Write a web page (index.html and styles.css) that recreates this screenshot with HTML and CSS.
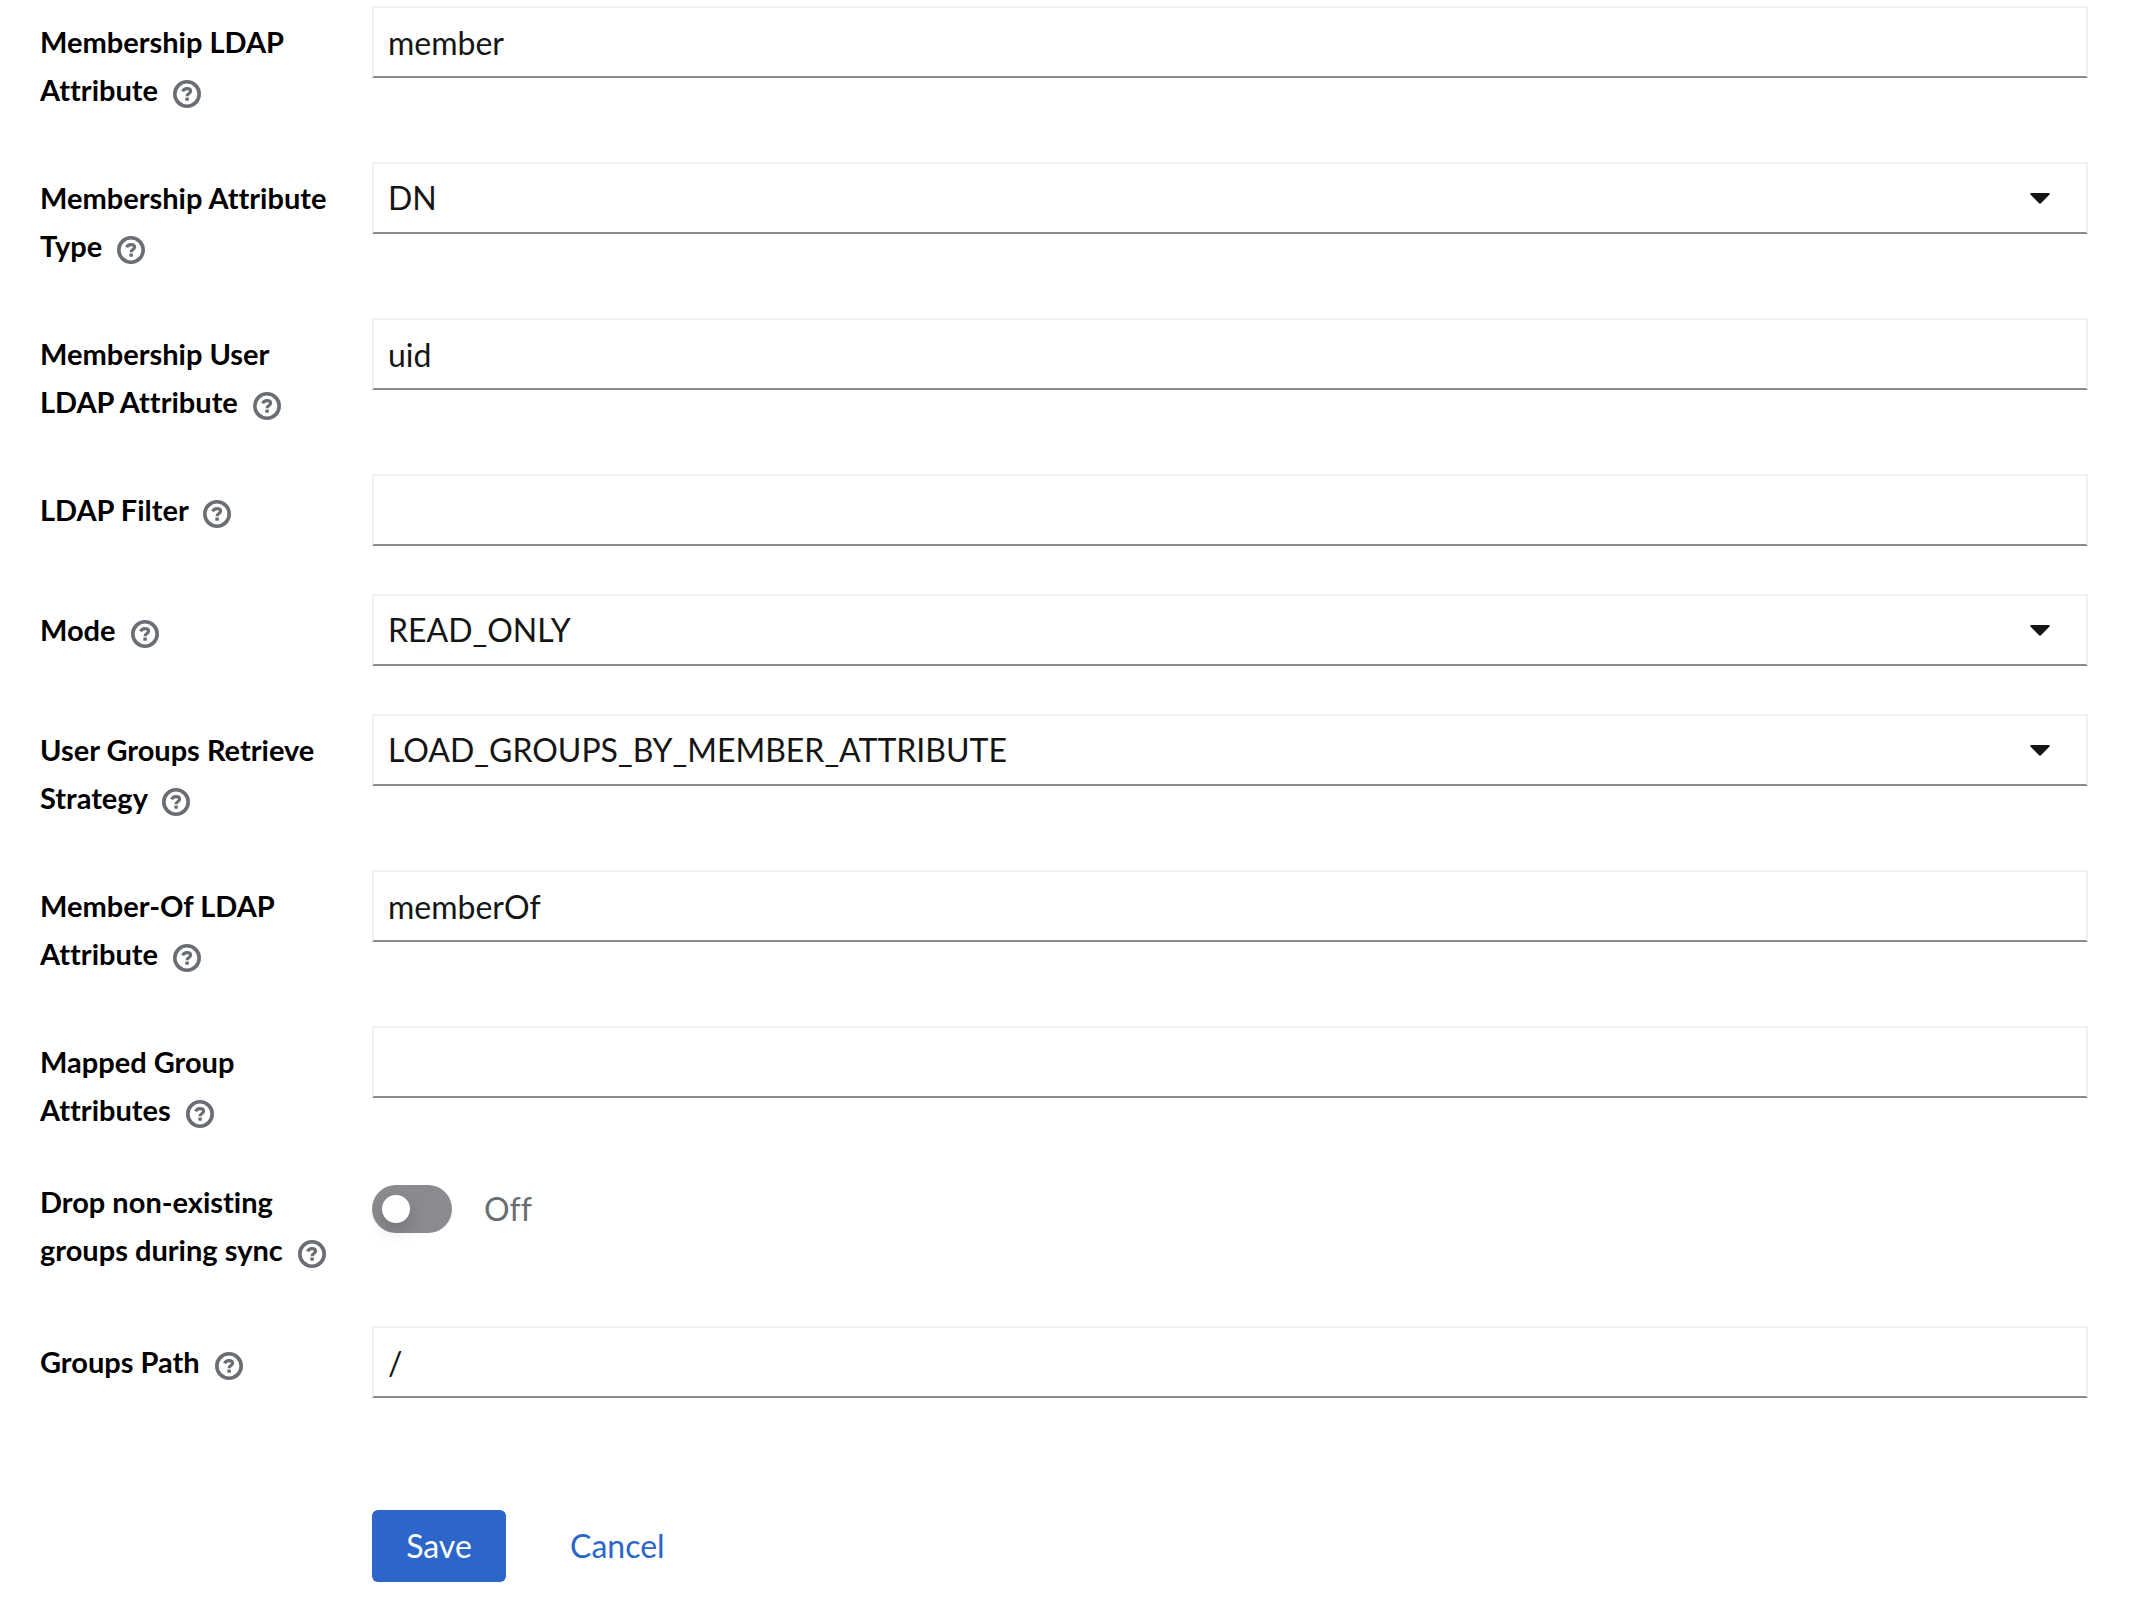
FILE: index.html
```html
<!DOCTYPE html>
<html lang="en">
<head>
    <meta charset="UTF-8">
    <title>Group LDAP Mapper</title>
    <link rel="stylesheet" href="styles.css">
</head>
<body>
    <svg class="sprite" aria-hidden="true">
        <symbol id="help" viewBox="0 0 28 28">
            <circle cx="14" cy="14" r="12.2" fill="none" stroke="currentColor" stroke-width="3.6"/>
            <path d="M9.6 11.4C10.4 9.4 12 8.6 14 8.6c2.2 0 3.6 1 3.6 2.7 0 2.3-3.5 2.2-3.5 4.900" fill="none" stroke="currentColor" stroke-width="3.2"/>
            <rect x="12.3" y="17.5" width="3.6" height="3.2" rx="0.6" fill="currentColor"/>
        </symbol>
        <symbol id="caret" viewBox="0 0 20 11">
            <path d="M1.2 0h17.6c.9 0 1.3 1 .7 1.6L11 10.2c-.6.6-1.4.6-2 0L.5 1.6C-.1 1 .3 0 1.2 0z" fill="currentColor"/>
        </symbol>
    </svg>

    <form class="mapper-form">
        <div class="form-group">
            <div class="form-label">
                <label for="membershipAttribute">Membership LDAP Attribute</label>
                <button type="button" class="help" aria-label="Help for Membership LDAP Attribute"><svg><use href="#help"/></svg></button>
            </div>
            <input class="control" type="text" id="membershipAttribute" value="member">
        </div>

        <div class="form-group">
            <div class="form-label">
                <label for="attributeType">Membership Attribute Type</label>
                <button type="button" class="help" aria-label="Help for Membership Attribute Type"><svg><use href="#help"/></svg></button>
            </div>
            <div class="select">
                <select class="control" id="attributeType">
                    <option>DN</option>
                    <option>UID</option>
                </select>
                <svg class="caret"><use href="#caret"/></svg>
            </div>
        </div>

        <div class="form-group">
            <div class="form-label">
                <label for="userAttribute">Membership User LDAP Attribute</label>
                <button type="button" class="help" aria-label="Help for Membership User LDAP Attribute"><svg><use href="#help"/></svg></button>
            </div>
            <input class="control" type="text" id="userAttribute" value="uid">
        </div>

        <div class="form-group">
            <div class="form-label">
                <label for="ldapFilter">LDAP Filter</label>
                <button type="button" class="help" aria-label="Help for LDAP Filter"><svg><use href="#help"/></svg></button>
            </div>
            <input class="control" type="text" id="ldapFilter">
        </div>

        <div class="form-group">
            <div class="form-label">
                <label for="mode">Mode</label>
                <button type="button" class="help" aria-label="Help for Mode"><svg><use href="#help"/></svg></button>
            </div>
            <div class="select">
                <select class="control" id="mode">
                    <option>READ_ONLY</option>
                    <option>LDAP_ONLY</option>
                    <option>IMPORT</option>
                </select>
                <svg class="caret"><use href="#caret"/></svg>
            </div>
        </div>

        <div class="form-group">
            <div class="form-label">
                <label for="strategy">User Groups Retrieve Strategy</label>
                <button type="button" class="help" aria-label="Help for User Groups Retrieve Strategy"><svg><use href="#help"/></svg></button>
            </div>
            <div class="select">
                <select class="control" id="strategy">
                    <option>LOAD_GROUPS_BY_MEMBER_ATTRIBUTE</option>
                    <option>GET_GROUPS_FROM_USER_MEMBEROF_ATTRIBUTE</option>
                </select>
                <svg class="caret"><use href="#caret"/></svg>
            </div>
        </div>

        <div class="form-group">
            <div class="form-label">
                <label for="memberOf">Member-Of LDAP Attribute</label>
                <button type="button" class="help" aria-label="Help for Member-Of LDAP Attribute"><svg><use href="#help"/></svg></button>
            </div>
            <input class="control" type="text" id="memberOf" value="memberOf">
        </div>

        <div class="form-group">
            <div class="form-label">
                <label for="mappedAttributes">Mapped Group Attributes</label>
                <button type="button" class="help" aria-label="Help for Mapped Group Attributes"><svg><use href="#help"/></svg></button>
            </div>
            <input class="control" type="text" id="mappedAttributes">
        </div>

        <div class="form-group form-group-switch">
            <div class="form-label">
                <label for="dropGroups">Drop non-existing groups during sync</label>
                <button type="button" class="help" aria-label="Help for Drop non-existing groups during sync"><svg><use href="#help"/></svg></button>
            </div>
            <div class="switch">
                <input type="checkbox" role="switch" id="dropGroups">
                <span>Off</span>
            </div>
        </div>

        <div class="form-group">
            <div class="form-label">
                <label for="groupsPath">Groups Path</label>
                <button type="button" class="help" aria-label="Help for Groups Path"><svg><use href="#help"/></svg></button>
            </div>
            <input class="control" type="text" id="groupsPath" value="/">
        </div>

        <div class="actions">
            <button type="submit" class="btn btn-primary">Save</button>
            <button type="button" class="btn btn-link">Cancel</button>
        </div>
    </form>
</body>
</html>
```

FILE: styles.css
```css
* {
    box-sizing: border-box;
}

body {
    margin: 0;
    background-color: #fff;
    color: #151515;
    font-family: Lato, sans-serif;
    font-size: 32px;
    line-height: 48px;
    font-variant-ligatures: none;
}

.sprite {
    display: none;
}

.mapper-form {
    display: flex;
    flex-direction: column;
    gap: 48px;
    padding: 6px 44px 20px 40px;
}

.form-group {
    display: grid;
    grid-template-columns: 300px 1fr;
    column-gap: 32px;
    align-items: start;
}

.form-label {
    padding-top: 12px;
    color: #000;
    font-size: 29px;
    font-weight: bold;
}

.help {
    display: inline-flex;
    margin: 0 0 0 8px;
    padding: 0;
    border: none;
    background: none;
    color: #6a6e73;
    vertical-align: -7px;
    cursor: pointer;
}

.help svg {
    width: 28px;
    height: 28px;
}

.control {
    display: block;
    width: 100%;
    height: 72px;
    padding: 0 14px;
    border: 2px solid #f0f0f0;
    border-bottom-color: #8a8b8f;
    border-radius: 0;
    background-color: #fff;
    color: #151515;
    font: inherit;
    appearance: none;
}

.select {
    position: relative;
}

.caret {
    position: absolute;
    top: 31px;
    right: 38px;
    width: 20px;
    height: 11px;
    pointer-events: none;
}

/* the switch label starts at the top of the row, with no input padding */
.form-group-switch {
    margin: -4px 0 4px;
}

.form-group-switch .form-label {
    padding-top: 0;
}

.switch {
    display: flex;
    align-items: center;
    gap: 32px;
    padding-top: 7px;
    color: #6a6e73;
}

.switch input {
    display: flex;
    align-items: center;
    width: 80px;
    height: 48px;
    margin: 0;
    padding: 0 10px;
    border-radius: 24px;
    background-color: #8a8b8f;
    appearance: none;
    cursor: pointer;
}

.switch input::before {
    content: "";
    width: 28px;
    height: 28px;
    border-radius: 50%;
    background-color: #fff;
    box-shadow: 0 8px 16px rgba(3, 3, 3, 0.16);
}

.switch input:checked {
    justify-content: flex-end;
    background-color: #2b66c8;
}

.actions {
    display: flex;
    gap: 32px;
    margin-left: 332px;
    padding-top: 64px;
}

.btn {
    min-width: 134px;
    padding: 12px 32px;
    border: none;
    border-radius: 6px;
    background: none;
    font: inherit;
    cursor: pointer;
}

.btn-primary {
    background-color: #2b66c8;
    color: #fff;
}

.btn-link {
    color: #2b66c8;
}
```
